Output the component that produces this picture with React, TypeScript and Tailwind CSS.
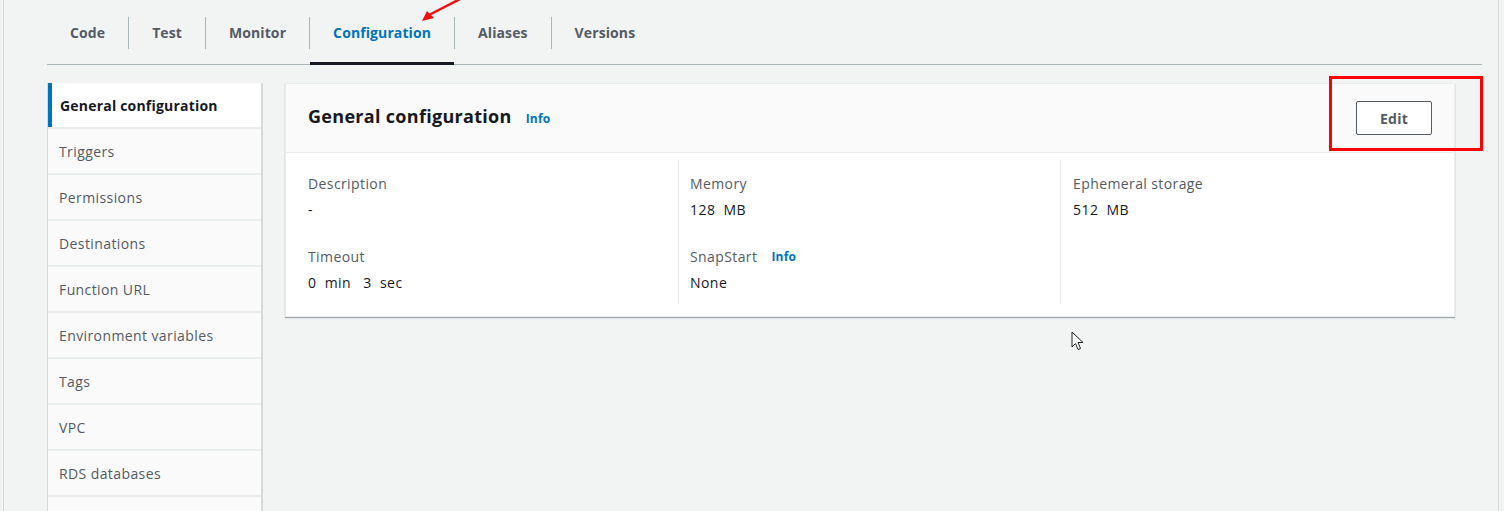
import React from "react";

const tabs = ["Code", "Test", "Monitor", "Configuration", "Aliases", "Versions"];

const navItems = [
  "General configuration",
  "Triggers",
  "Permissions",
  "Destinations",
  "Function URL",
  "Environment variables",
  "Tags",
  "VPC",
  "RDS databases",
  "",
];

function Field({ label, value, info }: { label: string; value: string; info?: boolean }) {
  return (
    <div className="flex flex-col">
      <div className="flex items-center gap-[14px] text-[14px] leading-[20px] tracking-[0.4px] text-[#545b64]">
        {label}
        {info && <span className="text-[12px] font-bold tracking-[0.2px] text-[#0073bb]">Info</span>}
      </div>
      <div className="mt-[6px] whitespace-pre text-[14px] leading-[20px] tracking-[0.45px] text-[#16191f]">{value}</div>
    </div>
  );
}

export default function App() {
  return (
    <div
      className="relative h-[511px] w-[1504px] overflow-hidden bg-[#f2f3f3] pl-[3px] pr-[5px]"
      style={{ fontFamily: '"Open Sans", "Noto Sans", Arial, sans-serif' }}
    >
      <div className="h-full border-x border-[#d5dbdb] pl-[43px] pr-[16px]">
        {/* tabs */}
        <div className="flex h-[65px] items-center border-b border-[#aab7b8]">
          {tabs.map((t, i) => (
            <div key={t} className="flex h-full items-stretch">
              {i > 0 && <div className="mb-[15px] mt-[17px] w-px bg-[#aab7b8]" />}
              <div
                className={
                  "relative flex items-center px-[23px] pt-[1px] text-[14px] font-bold tracking-[0.1px] " +
                  (t === "Configuration" ? "text-[#0073bb]" : "text-[#545b64]")
                }
              >
                {t}
                {t === "Configuration" && (
                  <div className="absolute bottom-[-1px] left-0 right-0 h-[3px] bg-[#16191f]" />
                )}
              </div>
            </div>
          ))}
        </div>

        <div className="mt-[18px] flex gap-[22px]">
          {/* side nav */}
          <div className="flex w-[216px] shrink-0 flex-col gap-[2px] border-l border-r-2 border-[#d5dbdb] bg-[#eaeded]">
            {navItems.map((n, i) => (
              <div
                key={i}
                className={
                  "flex h-[44px] shrink-0 items-center text-[14px] " +
                  (i === 0
                    ? "border-l-4 border-[#0073bb] bg-white pl-[8px] font-bold tracking-[0.2px] text-[#16191f]"
                    : "bg-[#fafafa] pl-[11px] tracking-[0.4px] text-[#545b64]")
                }
              >
                {n}
              </div>
            ))}
          </div>

          {/* card */}
          <div className="h-[234px] w-[1170px] border border-[#eaeded] bg-white shadow-[0_1px_1px_0_rgba(0,28,36,0.35)]">
            <div className="flex h-[69px] items-center justify-between border-b border-[#eaeded] bg-[#fafafa] px-[22px]">
              <div className="-mt-[4px] flex items-baseline gap-[14px]">
                <span className="text-[18px] font-bold tracking-[0.3px] text-[#16191f]">General configuration</span>
                <span className="text-[12px] font-bold tracking-[0.2px] text-[#0073bb]">Info</span>
              </div>
              <button className="h-[34px] w-[76px] rounded-[2px] border border-[#545b64] bg-white text-[14px] font-bold tracking-[0.25px] text-[#545b64]">
                Edit
              </button>
            </div>
            <div className="flex pb-[12px] pl-[22px] pt-[7px]">
              <div className="flex w-[370px] flex-col gap-[27px] pt-[14px]">
                <Field label="Description" value="-" />
                <Field label="Timeout" value="0  min   3  sec" />
              </div>
              <div className="flex h-[144px] w-[382px] flex-col gap-[27px] border-l border-[#eaeded] pl-[11px] pt-[14px]">
                <Field label="Memory" value="128  MB" />
                <Field label="SnapStart" value="None" info />
              </div>
              <div className="flex h-[144px] flex-1 flex-col gap-[27px] border-l border-[#eaeded] pl-[12px] pt-[14px]">
                <Field label="Ephemeral storage" value="512  MB" />
              </div>
            </div>
          </div>
        </div>
      </div>

      {/* annotation: red box around Edit */}
      <div className="absolute left-[1329px] top-[76px] h-[75px] w-[154px] border-[3px] border-[#ff0000]" />

      {/* annotation: red arrow */}
      <svg className="absolute left-[414px] top-0" width="50" height="26" viewBox="0 0 50 26">
        <line x1="48" y1="-2" x2="15" y2="15" stroke="#f01010" strokeWidth="2.5" />
        <polygon points="8,21 13,11 20,18" fill="#f01010" />
      </svg>

      {/* mouse cursor */}
      <svg className="absolute left-[1071px] top-[331px]" width="14" height="20" viewBox="0 0 14 20">
        <path d="M1 1 L1 16 L4.5 12.5 L7 18.5 L9.5 17.5 L7 11.5 L12 11.5 Z" fill="white" stroke="#222" strokeWidth="1" strokeLinejoin="round" />
      </svg>
    </div>
  );
}
